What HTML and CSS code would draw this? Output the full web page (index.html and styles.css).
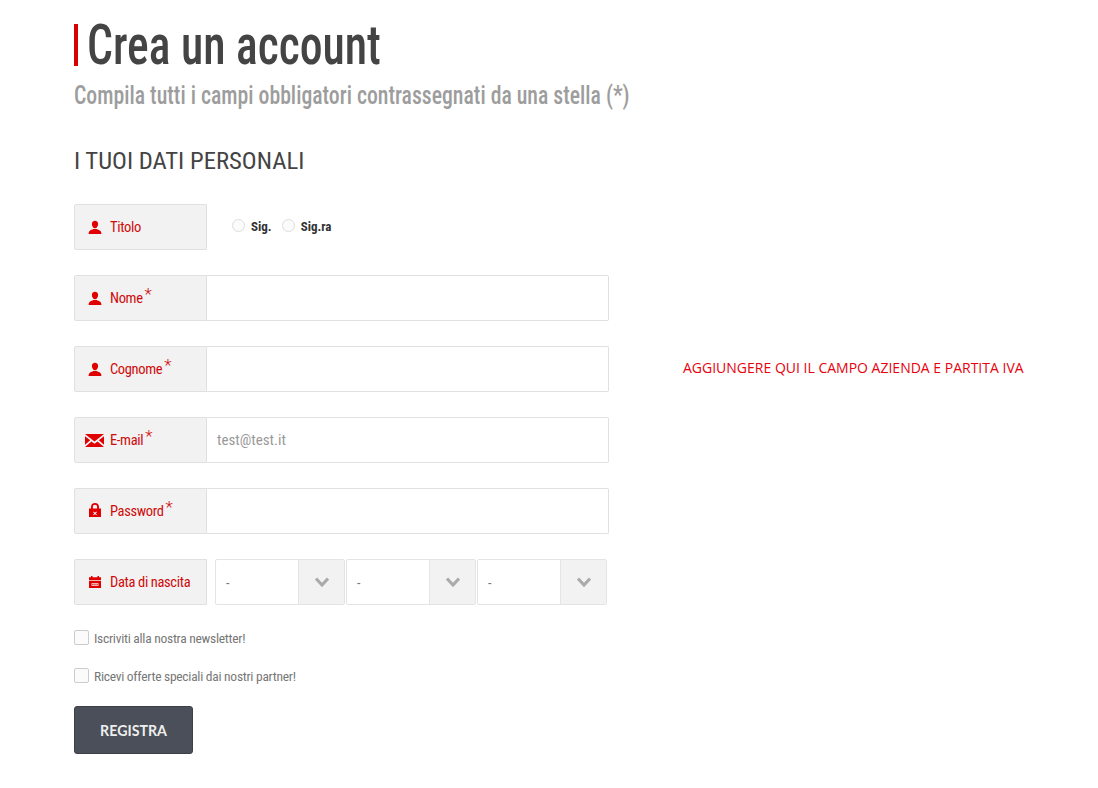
FILE: index.html
```html
<!DOCTYPE html>
<html lang="it">
<head>
<meta charset="utf-8">
<title>Crea un account</title>
<link rel="stylesheet" href="styles.css">
</head>
<body>
<main class="page">
  <h1 class="title"><span class="title-text">Crea un account</span></h1>
  <p class="subtitle"><span class="subtitle-text">Compila tutti i campi obbligatori contrassegnati da una stella (*)</span></p>
  <h2 class="section">I TUOI DATI PERSONALI</h2>
  <form class="form">
    <div class="row">
      <div class="label"><svg class="ico" viewBox="0 0 14 14"><path d="M7 .8c1.900 0 3.100 1.300 3.100 3.100S8.900 8.200 7 8.200 3.900 5.700 3.900 3.900 5.100.8 7 .8zM.6 14c0-1.100.1-2.900 1.600-3.600 1-.5 2.200-.6 3.100-1.400h3.400c.9.800 2.100.9 3.100 1.400 1.500.7 1.600 2.500 1.600 3.600z"/></svg><span>Titolo</span></div>
      <div class="radios">
        <span class="radio"></span><span class="radio-text">Sig.</span>
        <span class="radio"></span><span class="radio-text">Sig.ra</span>
      </div>
    </div>
    <div class="row">
      <div class="label"><svg class="ico" viewBox="0 0 14 14"><path d="M7 .8c1.900 0 3.100 1.300 3.100 3.100S8.900 8.200 7 8.200 3.900 5.700 3.900 3.900 5.100.8 7 .8zM.6 14c0-1.100.1-2.900 1.600-3.600 1-.5 2.200-.6 3.100-1.400h3.400c.9.800 2.100.9 3.100 1.400 1.500.7 1.600 2.500 1.600 3.600z"/></svg><span>Nome</span><span class="req">*</span></div>
      <div class="field"></div>
    </div>
    <div class="row">
      <div class="label"><svg class="ico" viewBox="0 0 14 14"><path d="M7 .8c1.900 0 3.100 1.300 3.100 3.100S8.900 8.200 7 8.200 3.900 5.700 3.900 3.900 5.100.8 7 .8zM.6 14c0-1.100.1-2.900 1.600-3.600 1-.5 2.200-.6 3.100-1.400h3.400c.9.800 2.100.9 3.100 1.400 1.500.7 1.600 2.500 1.600 3.600z"/></svg><span>Cognome</span><span class="req">*</span></div>
      <div class="field"></div>
    </div>
    <div class="row">
      <div class="label label-mail"><svg class="ico-mail" viewBox="0 0 19 13"><path d="M0 0h19L9.500 7.500zM0 2.200v8.600L5.200 6.300zM19 2.200v8.600l-5.200-4.500zM0 13l6.500-5.600 3 2.300 3-2.300L19 13z"/></svg><span>E-mail</span><span class="req">*</span></div>
      <div class="field"><span class="placeholder">test@test.it</span></div>
    </div>
    <div class="row">
      <div class="label"><svg class="ico ico-lock" viewBox="0 0 14 14"><path fill-rule="evenodd" d="M1 5.500h2V4C3 1.600 4.600 0 7 0s4 1.600 4 4v1.500h2V14H1zM4.900 5.500h4.200V4C9.100 2.700 8.300 1.800 7 1.800S4.900 2.700 4.900 4zM5.700 8.600 7 9.800l1.300-1.200.6.600L7.700 10.400l1.200 1.200-.6.600L7 11l-1.300 1.200-.6-.6 1.200-1.200-1.200-1.200z"/></svg><span>Password</span><span class="req">*</span></div>
      <div class="field"></div>
    </div>
    <div class="row">
      <div class="label"><svg class="ico" viewBox="0 0 14 14"><path fill-rule="evenodd" d="M3 1h1.500v1.200h5V1H11v1.200h2v3H1v-3h2zM1 6h12v7H1zM3.500 8.300v2.400h7V8.300zM4.300 9h1.200v1H4.300zM6.400 9h1.200v1H6.400zM8.500 9h1.200v1H8.500z"/></svg><span>Data di nascita</span></div>
      <div class="selects">
        <div class="select"><span class="select-value">-</span><span class="select-btn"><svg class="chev" viewBox="0 0 14 10"><path d="M1 1.500 7 8 13 1.500"/></svg></span></div>
        <div class="select"><span class="select-value">-</span><span class="select-btn"><svg class="chev" viewBox="0 0 14 10"><path d="M1 1.500 7 8 13 1.500"/></svg></span></div>
        <div class="select"><span class="select-value">-</span><span class="select-btn"><svg class="chev" viewBox="0 0 14 10"><path d="M1 1.500 7 8 13 1.500"/></svg></span></div>
      </div>
    </div>
    <label class="check"><span class="box"></span><span>Iscriviti alla nostra newsletter!</span></label>
    <label class="check"><span class="box"></span><span>Ricevi offerte speciali dai nostri partner!</span></label>
    <button class="submit" type="button">REGISTRA</button>
  </form>
  <p class="note">AGGIUNGERE QUI IL CAMPO AZIENDA E PARTITA IVA</p>
</main>
</body>
</html>
```
FILE: styles.css
```css
* { box-sizing: border-box; }
html, body { margin: 0; padding: 0; background: #fff; }
body { font-family: "Roboto", sans-serif; font-stretch: 75%; height: 788px; overflow: hidden; }
.page { position: relative; padding: 24px 0 0 74px; }
.title {
  margin: 0;
  height: 42px;
  border-left: 4px solid #d90000;
  padding-left: 8.5px;
  font-size: 56px;
  line-height: 42px;
  font-weight: 500;
  color: #444;
  white-space: nowrap;
}
.title-text { display: inline-block; transform: scaleX(.815); transform-origin: 0 50%; }
.subtitle {
  margin: 15px 0 0;
  height: 29px;
  font-size: 25px;
  line-height: 29px;
  font-weight: 500;
  color: #9d9d9d;
  white-space: nowrap;
}
.subtitle-text { display: inline-block; transform: scaleX(.87); transform-origin: 0 50%; }
.section {
  margin: 38px 0 0;
  height: 26px;
  font-size: 24.700px;
  line-height: 26px;
  font-weight: 400;
  color: #444;
}
.form { margin-top: 30px; }
.row { display: flex; height: 46px; margin-bottom: 25px; }
.label {
  flex: 0 0 133px;
  display: flex;
  align-items: center;
  padding-left: 13px;
  background: #f2f2f2;
  border: 1px solid #e0e0e0;
  border-radius: 2px 0 0 2px;
  color: #cf0a0a;
  font-size: 14.500px;
  letter-spacing: -.35px;
  white-space: nowrap;
}
.label-mail { padding-left: 10px; }
.ico { width: 14px; height: 14px; margin: 0 8px 0 0; fill: #e00000; flex: none; }
.ico-lock { margin-bottom: 2px; }
.ico-mail { width: 19px; height: 13px; margin: 0 6px 0 0; fill: #e00000; flex: none; }
.req { font-size: 17px; font-weight: 300; line-height: 1; margin: -8px 0 0 2px; }
.field {
  flex: 0 0 402px;
  display: flex;
  align-items: center;
  padding-left: 10px;
  border: 1px solid #e0e0e0;
  border-left: 0;
  border-radius: 0 2px 2px 0;
}
.placeholder { font-size: 15px; color: #999; }
.radios { display: flex; align-items: center; padding-left: 25px; }
.radio { width: 13px; height: 13px; border: 1px solid #ddd; border-radius: 50%; background: #fbfbfb; margin: -4px 6px 0 0; }
.radio-text { font-size: 13px; font-weight: 700; color: #333; margin: -1px 10px 0 0; }
.selects { display: flex; padding-left: 8px; gap: 1px; }
.select { display: flex; width: 130px; height: 46px; border: 1px solid #e4e4e4; border-radius: 2px; }
.select-value { flex: 1; padding: 15px 0 0 10px; font-size: 14px; color: #777; }
.select-btn { flex: 0 0 46px; display: flex; align-items: center; justify-content: center; background: #f2f2f2; border-left: 1px solid #e4e4e4; }
.chev { width: 14px; height: 10px; fill: none; stroke: #aaa; stroke-width: 3; }
.check { display: flex; align-items: center; height: 15px; margin-bottom: 23px; font-size: 13.500px; letter-spacing: -.27px; color: #777; }
.box { width: 15px; height: 15px; border: 1px solid #ccc; border-radius: 2px; background: #fbfbfb; margin-right: 5px; }
.submit {
  display: block;
  width: 119px;
  height: 48px;
  background: #4a4f59;
  border: 1px solid #3c4049;
  border-radius: 3px;
  color: #eee;
  font-family: "Lato", sans-serif;
  font-stretch: normal;
  font-size: 14.200px;
  font-weight: 700;
}
.note {
  position: absolute;
  left: 683px;
  top: 359px;
  margin: 0;
  font-family: "Open Sans", sans-serif;
  font-stretch: normal;
  font-size: 14px;
  line-height: 18px;
  color: #e8000d;
  white-space: nowrap;
}
```
